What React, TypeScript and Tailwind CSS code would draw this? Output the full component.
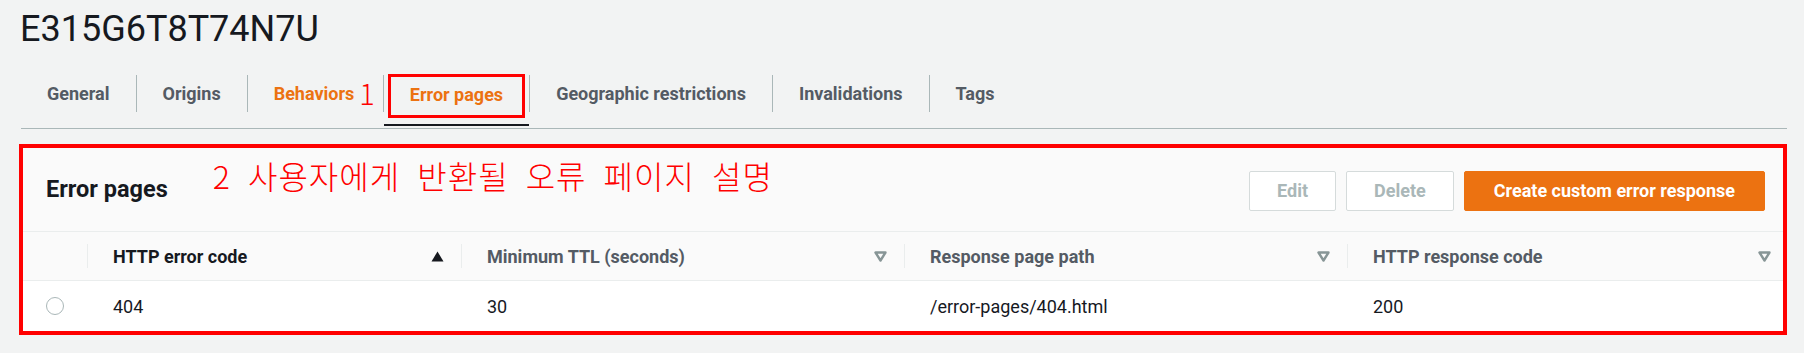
import { useState } from "react";

const ui = "font-['Roboto','Liberation_Sans',sans-serif]";
const note = "font-['Noto_Sans_CJK_KR','Noto_Sans',sans-serif]";

const tabs = ["General", "Origins", "Behaviors", "Error pages", "Geographic restrictions", "Invalidations", "Tags"];

const cols = [
  { name: "HTTP error code", sorted: true },
  { name: "Minimum TTL (seconds)", sorted: false },
  { name: "Response page path", sorted: false },
  { name: "HTTP response code", sorted: false },
];

const row = ["404", "30", "/error-pages/404.html", "200"];

const SortIcon = ({ active }: { active: boolean }) =>
  active ? (
    <svg width="13" height="11" viewBox="0 0 13 11">
      <polygon points="6.5,0.5 12.5,10.5 0.5,10.5" fill="#16191f" />
    </svg>
  ) : (
    <svg width="13" height="11" viewBox="0 0 13 11">
      <polygon points="1.5,1.5 11.5,1.5 6.5,9.5" fill="none" stroke="#879596" strokeWidth="2.4" strokeLinejoin="round" />
    </svg>
  );

export default function App() {
  const [tab, setTab] = useState(3);
  const [picked, setPicked] = useState(false);

  return (
    <div className={`${ui} min-h-[353px] bg-[#f2f3f3] pl-[19px] pr-[17px] pt-[8px] text-[#16191f]`}>
      <h1 className="text-[36px] leading-[43px] font-normal pl-[1px]">E315G6T8T74N7U</h1>

      <div role="tablist" className="mt-[21px] ml-[2px] flex border-b border-[#aab7b8] pb-[2px]">
        {tabs.map((t, i) => {
          const active = i === tab;
          const orange = i === 2 || i === 3;
          return (
            <div key={t} className="flex">
              {i > 0 && <div className="mt-[3px] h-[37px] w-px bg-[#aab7b8]" />}
              <div
                role="tab"
                onClick={() => setTab(i)}
                className={`h-[54px] cursor-pointer ${active ? "border-b-2 border-[#16191f] pt-[2px]" : "pt-[3px]"}`}
              >
                {active ? (
                  <div className="mx-[4px] flex h-[44px] items-start border-[3px] border-[#ff0000] px-[19px] pt-[6px]">
                    <span className={`text-[18px] font-bold leading-[24px] ${orange ? "text-[#ec7211]" : "text-[#545b64]"}`}>{t}</span>
                  </div>
                ) : (
                  <div className={`flex h-[37px] items-center ${i === 2 ? "pl-[26px] pr-[8px]" : "px-[26px]"}`}>
                    <span className={`text-[18px] font-bold ${orange ? "text-[#ec7211]" : "text-[#545b64]"}`}>{t}</span>
                    {i === 2 && <span className={`${note} ml-[5px] mb-[2px] text-[29px] font-light leading-none text-[#ff0000]`}>1</span>}
                  </div>
                )}
              </div>
            </div>
          );
        })}
      </div>

      <div className="mt-[15px] border-[4px] border-[#ff0000]">
        <div className="flex h-[84px] items-center border-b border-[#eaeded] bg-[#fafafa] pl-[23px] pr-[18px]">
          <h2 className="text-[23.5px] font-bold">Error pages</h2>
          <span className={`${note} ml-[45px] mb-[29px] text-[32px] font-light tracking-[1px] text-[#ff0000] [word-spacing:9px]`}>
            2 사용자에게 반환될 오류 페이지 설명
          </span>
          <div className="ml-auto mt-[2px] flex gap-[10px]">
            <button className="h-[40px] rounded-[2px] border border-[#d5dbdb] bg-white px-[27px] text-[18px] font-bold text-[#aab7b8]">Edit</button>
            <button className="h-[40px] rounded-[2px] border border-[#d5dbdb] bg-white px-[27px] text-[18px] font-bold text-[#aab7b8]">Delete</button>
            <button className="h-[40px] rounded-[2px] border border-[#ec7211] bg-[#ec7211] px-[29px] text-[18px] font-bold text-white">
              Create custom error response
            </button>
          </div>
        </div>

        <div className="grid h-[49px] grid-cols-[64px_374px_443px_443px_1fr] items-center border-b border-[#eaeded] bg-[#fafafa]">
          <div />
          {cols.map((c, i) => (
            <div key={c.name} className="flex items-center">
              <div className="h-[24px] w-px bg-[#eaeded]" />
              <span className={`pl-[25px] text-[18px] font-bold ${c.sorted ? "text-[#16191f]" : "text-[#545b64]"}`}>{c.name}</span>
              <span className={`ml-auto flex ${i === 3 ? "pr-[12px]" : "pr-[17px]"}`}>
                <SortIcon active={c.sorted} />
              </span>
            </div>
          ))}
        </div>

        <div className="grid h-[50px] grid-cols-[64px_374px_443px_443px_1fr] items-center bg-white text-[18px]">
          <div className="flex justify-center">
            <button
              onClick={() => setPicked(!picked)}
              className={`h-[18px] w-[18px] rounded-full border-[1.5px] bg-white ${picked ? "border-[5px] border-[#0073bb]" : "border-[#aab7b8]"}`}
            />
          </div>
          {row.map((v, i) => (
            <div key={i} className="pl-[26px]">{v}</div>
          ))}
        </div>
      </div>
    </div>
  );
}
